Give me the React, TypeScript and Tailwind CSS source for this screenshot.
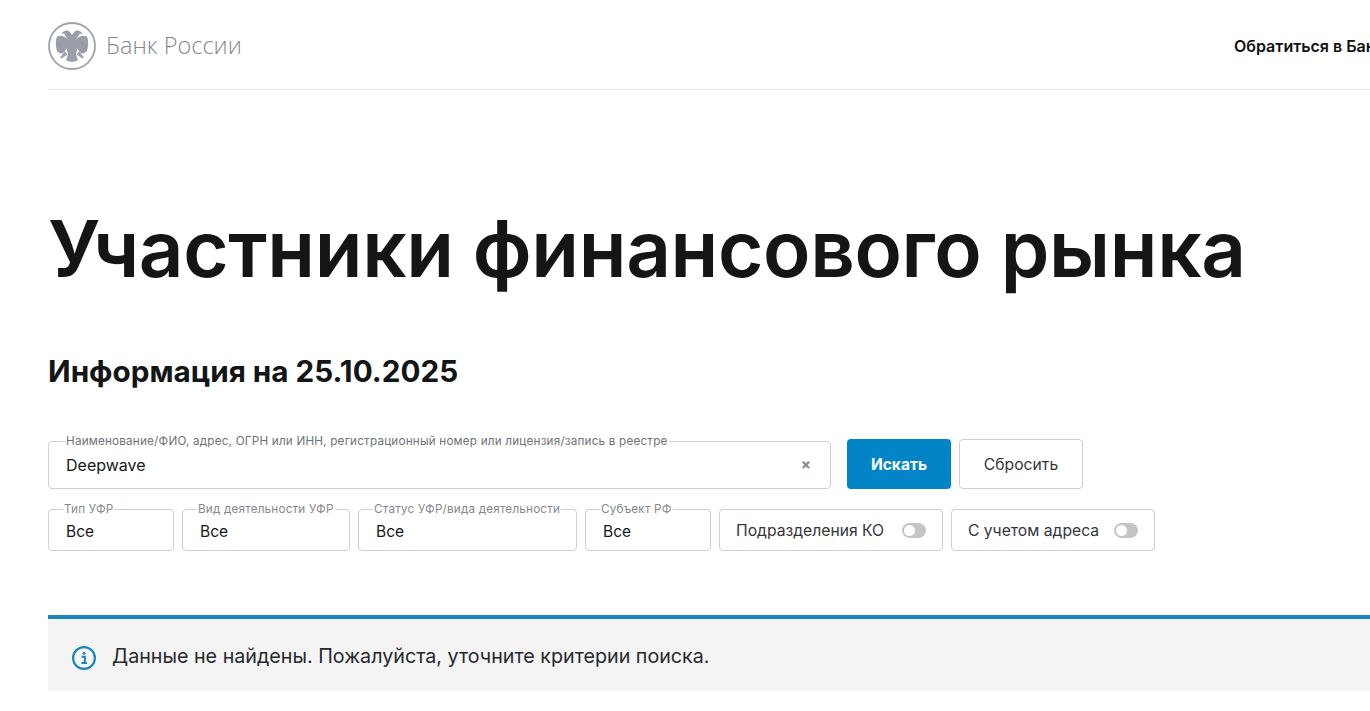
const FONT = "font-['Inter','Roboto',sans-serif]";

function Eagle() {
  return (
    <svg width="48" height="48" viewBox="0 0 48 48" fill="none">
      <circle cx="24" cy="24" r="23" stroke="#a0a3ab" strokeWidth="1.8" />
      <g fill="#9a9ea8">
        {/* left wing, head, leg */}
        <path d="M19.5 17 C16 13.5 12 13 9 14.5 C7.5 18 7.5 24 9 29 C10 31 12 30.5 13 31.5 C15 32 17.5 29 19 25.5 L21 21 Z" />
        <path d="M23.5 13.5 C23 10.5 21 8.5 18.5 8.5 C16.5 8.5 14.5 10 13 11.5 L16.5 11.8 C17 13.5 18.5 15 19.5 17 L22 20 Z" />
        <path d="M17 29.5 L12 35.5 L13.5 36.5 L19.5 32.5 Z" />
        {/* right wing, head, leg */}
        <path d="M28.5 17 C32 13.5 36 13 39 14.5 C40.5 18 40.5 24 39 29 C38 31 36 30.5 35 31.5 C33 32 30.5 29 29 25.5 L27 21 Z" />
        <path d="M24.5 13.5 C25 10.5 27 8.5 29.5 8.5 C31.5 8.5 33.5 10 35 11.5 L31.5 11.8 C31 13.5 29.5 15 28.5 17 L26 20 Z" />
        <path d="M31 29.5 L36 35.5 L34.500 36.5 L28.500 32.5 Z" />
        {/* body, tail */}
        <path d="M20 15 L24 12 L28 15 L29.5 26 L28 32 L30 38.500 L24 40 L18 38.500 L20 32 L18.500 26 Z" />
      </g>
    </svg>
  );
}

function InfoIcon() {
  return (
    <svg width="24" height="24" viewBox="0 0 24 24" fill="none" className="mt-[6px] shrink-0">
      <circle cx="12" cy="12" r="10.9" stroke="#1a85b8" strokeWidth="2.2" />
      <circle cx="12" cy="7.300" r="1.500" fill="#1a85b8" />
      <path d="M9.500 10.800 H12.800 V16.500 M9.500 17 H15" stroke="#1a85b8" strokeWidth="2" />
    </svg>
  );
}

function SelectField({ label, width }: { label: string; width: string }) {
  return (
    <fieldset className={`${width} h-[47px] shrink-0 rounded border border-[#cdcfd3] pl-[17px]`}>
      <legend className="px-px -ml-[3px] text-[11.7px] leading-[11px] tracking-[0.2px] text-[#85888e]">{label}</legend>
      <div className="mt-[5px] text-[15.5px] leading-[24px] text-[#16181b]">Все</div>
    </fieldset>
  );
}

function ToggleField({ label, width }: { label: string; width: string }) {
  return (
    <div className={`${width} h-[42px] shrink-0 rounded border border-[#cdcfd3] pl-[16px] pr-[16px] flex items-center justify-between`}>
      <span className="text-[15.7px] pt-[2px] text-[#33363b]">{label}</span>
      <span className="w-6 h-[15px] rounded-full bg-[#c3c5c9] flex items-center pl-[2px]">
        <span className="w-[11px] h-[11px] rounded-full bg-white" />
      </span>
    </div>
  );
}

export default function App() {
  return (
    <div className={`${FONT} h-[711px] w-[1370px] overflow-hidden bg-white pl-12`}>
      {/* Header */}
      <header className="h-[90px] w-[1400px] border-b border-[#e8e9eb] flex items-center justify-between pt-[3px]">
        <div className="flex items-center gap-[10px]">
          <Eagle />
          <span className="font-['Open_Sans',sans-serif] font-light text-[23.5px] leading-none text-[#85888f]">Банк России</span>
        </div>
        <span className="text-[16px] font-semibold text-[#111] whitespace-nowrap w-[214px]">Обратиться в Банк России</span>
      </header>

      {/* Title */}
      <h1 className="mt-[104px] text-[78px] leading-[110px] tracking-[-0.37px] font-[560] text-[#131517] whitespace-nowrap">
        Участники финансового рынка
      </h1>
      <h2 className="mt-[47px] text-[29.7px] leading-[40px] font-bold text-[#131517] whitespace-nowrap">
        Информация на 25.10.2025
      </h2>

      {/* Search */}
      <div className="mt-[45px] flex items-end gap-2">
        <fieldset className="w-[783px] h-[53px] rounded border border-[#cdcfd3] pl-[17px] pr-[19px] mr-2">
          <legend className="px-px -ml-px text-[11.7px] leading-[11px] tracking-[0.2px] text-[#6f7278]">
            Наименование/ФИО, адрес, ОГРН или ИНН, регистрационный номер или лицензия/запись в реестре
          </legend>
          <div className="flex items-center justify-between mt-[6px] leading-[24px]">
            <span className="text-[16px] text-[#16181b]">Deepwave</span>
            <span className="text-[15px] font-bold text-[#85888e]">×</span>
          </div>
        </fieldset>
        <button className="w-[104px] h-[50px] pt-[2px] rounded bg-[#0284c7] text-white text-[15.5px] font-bold">Искать</button>
        <button className="w-[124px] h-[50px] pt-[2px] rounded border border-[#cdcfd3] text-[15.7px] text-[#33363b]">Сбросить</button>
      </div>

      {/* Filters */}
      <div className="mt-[15px] flex items-end gap-2">
        <SelectField label="Тип УФР" width="w-[126px]" />
        <SelectField label="Вид деятельности УФР" width="w-[168px]" />
        <SelectField label="Статус УФР/вида деятельности" width="w-[219px]" />
        <SelectField label="Субъект РФ" width="w-[126px]" />
        <ToggleField label="Подразделения КО" width="w-[224px]" />
        <ToggleField label="С учетом адреса" width="w-[204px]" />
      </div>

      {/* Alert */}
      <div className="mt-16 w-[1400px] h-[76px] border-t-4 border-[#1a85b8] bg-[#f4f4f5] flex items-center pl-6 gap-4">
        <InfoIcon />
        <span className="text-[19.700px] mt-[4px] text-[#26282c]">Данные не найдены. Пожалуйста, уточните критерии поиска.</span>
      </div>
    </div>
  );
}
